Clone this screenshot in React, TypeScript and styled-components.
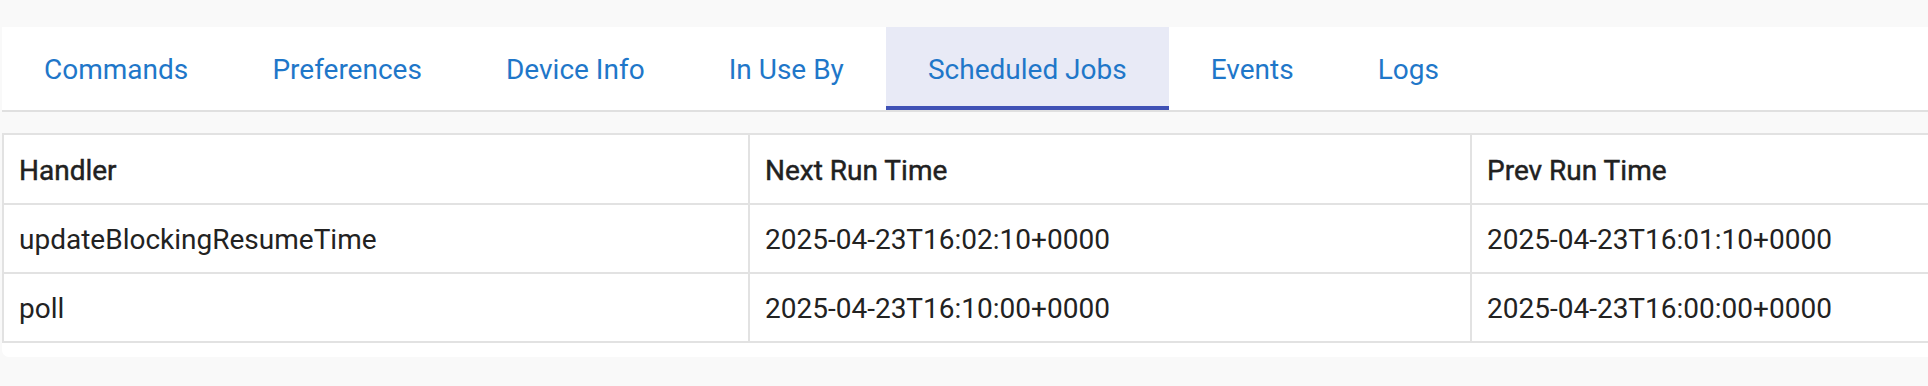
import React from 'react';
import styled, { createGlobalStyle } from 'styled-components';

const GlobalStyle = createGlobalStyle`
  html,
  body {
    margin: 0;
    padding: 0;
    background: #f9f9f9;
    font-family: Roboto, 'Liberation Sans', sans-serif;
    overflow: hidden;
  }
`;

interface JobRow {
  handler: string;
  nextRunTime: string;
  prevRunTime: string;
}

const tabs = [
  'Commands',
  'Preferences',
  'Device Info',
  'In Use By',
  'Scheduled Jobs',
  'Events',
  'Logs',
];

const jobs: JobRow[] = [
  {
    handler: 'updateBlockingResumeTime',
    nextRunTime: '2025-04-23T16:02:10+0000',
    prevRunTime: '2025-04-23T16:01:10+0000',
  },
  {
    handler: 'poll',
    nextRunTime: '2025-04-23T16:10:00+0000',
    prevRunTime: '2025-04-23T16:00:00+0000',
  },
];

const Page = styled.div`
  padding: 27px 0 0 2px;
`;

const TabBar = styled.nav`
  display: flex;
  flex-direction: row;
  height: 83px;
  background: #ffffff;
  border-bottom: 2px solid #e0e0e0;
`;

const Tab = styled.div<{ $active?: boolean }>`
  position: relative;
  display: flex;
  align-items: center;
  padding: 2px 42.05px 0;
  font-size: 28px;
  font-weight: 400;
  color: #1f77c9;
  background: ${(props) => (props.$active ? '#e8eaf6' : 'transparent')};
  white-space: nowrap;
  cursor: pointer;
  &::after {
    content: '';
    position: absolute;
    left: 0;
    right: 0;
    bottom: 0;
    height: 4px;
    background: ${(props) => (props.$active ? '#3f51b5' : 'transparent')};
  }
`;

const TableCard = styled.section`
  margin-top: 21px;
  padding-bottom: 14px;
  background: #ffffff;
  border-bottom-left-radius: 7px;
`;

const Table = styled.table`
  width: 100%;
  table-layout: fixed;
  border-collapse: separate;
  border-spacing: 0;
  border-top: 2px solid #e2e2e2;
`;

const HeadCell = styled.th`
  box-sizing: border-box;
  height: 70px;
  padding: 2px 15px 0;
  text-align: left;
  font-size: 28px;
  font-weight: 400;
  color: #212121;
  -webkit-text-stroke: 0.45px #212121;
  border-left: 2px solid #e2e2e2;
  border-bottom: 2px solid #e2e2e2;
`;

const Cell = styled.td`
  box-sizing: border-box;
  height: 69px;
  padding: 2px 15px 0;
  font-size: 28px;
  font-weight: 400;
  color: #222222;
  white-space: nowrap;
  border-left: 2px solid #e2e2e2;
  border-bottom: 2px solid #e2e2e2;
`;

export function ScheduledJobs() {
  return (
    <TableCard>
      <Table>
        <colgroup>
          <col style={{ width: 746 }} />
          <col style={{ width: 722 }} />
          <col />
        </colgroup>
        <thead>
          <tr>
            <HeadCell>Handler</HeadCell>
            <HeadCell>Next Run Time</HeadCell>
            <HeadCell>Prev Run Time</HeadCell>
          </tr>
        </thead>
        <tbody>
          {jobs.map((job) => (
            <tr key={job.handler}>
              <Cell>{job.handler}</Cell>
              <Cell>{job.nextRunTime}</Cell>
              <Cell>{job.prevRunTime}</Cell>
            </tr>
          ))}
        </tbody>
      </Table>
    </TableCard>
  );
}

export default function App() {
  return (
    <Page>
      <GlobalStyle />
      <TabBar>
        {tabs.map((tab) => (
          <Tab key={tab} $active={tab === 'Scheduled Jobs'}>
            {tab}
          </Tab>
        ))}
      </TabBar>
      <ScheduledJobs />
    </Page>
  );
}
